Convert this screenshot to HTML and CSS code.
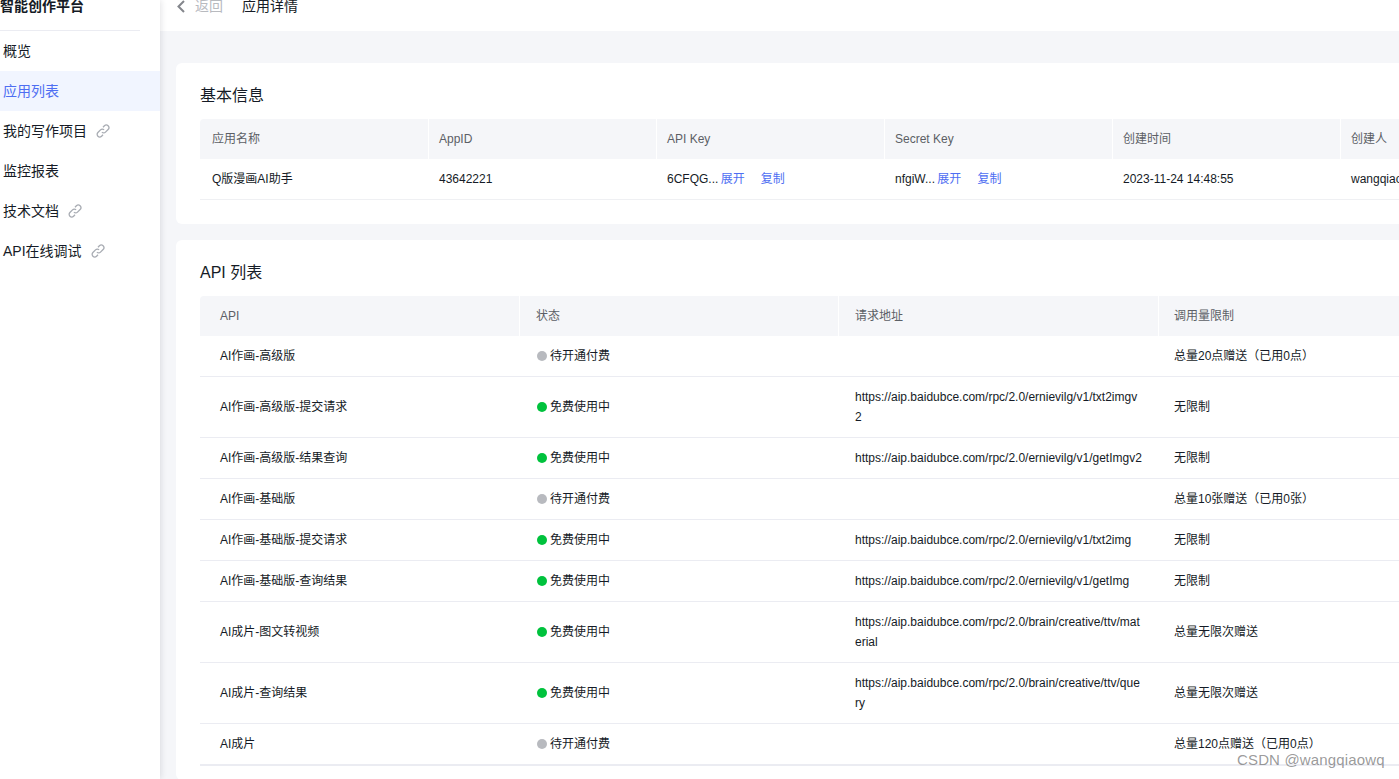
FILE: index.html
```html
<!DOCTYPE html>
<html lang="zh">
<head>
<meta charset="utf-8">
<title>应用详情</title>
<link rel="stylesheet" href="styles.css">
</head>
<body>
<svg class="defs" width="0" height="0"><symbol id="chain" viewBox="0 0 14 14"><path d="M5.9 8.1a2.5 2.5 0 0 0 3.6 0l2.6-2.6a2.6 2.6 0 0 0-3.7-3.7L7 3.2M8.1 5.9a2.5 2.5 0 0 0-3.6 0L1.9 8.5a2.6 2.6 0 0 0 3.7 3.7L7 10.8" fill="none" stroke="currentColor" stroke-width="1.3"/></symbol></svg>
<div class="app">
  <aside class="side">
    <div class="brand">智能创作平台</div>
    <nav class="nav">
      <a class="item">概览</a>
      <a class="item active">应用列表</a>
      <a class="item">我的写作项目<svg class="chain"><use href="#chain"/></svg></a>
      <a class="item">监控报表</a>
      <a class="item">技术文档<svg class="chain"><use href="#chain"/></svg></a>
      <a class="item">API在线调试<svg class="chain"><use href="#chain"/></svg></a>
    </nav>
  </aside>
  <main class="main">
    <header class="top">
      <svg class="back" viewBox="0 0 10 14" width="10" height="14"><path d="M8 1 2.5 6.5 8 12" fill="none" stroke="currentColor" stroke-width="2"/></svg>
      <span class="back-text">返回</span>
      <span class="page-title">应用详情</span>
    </header>
    <div class="content">
      <section class="card info">
        <h2 class="card-title">基本信息</h2>
        <table class="tb tb-info">
          <colgroup><col class="i1"><col class="i1"><col class="i1"><col class="i1"><col class="i1"><col class="i6"></colgroup>
          <thead><tr><th>应用名称</th><th>AppID</th><th>API Key</th><th>Secret Key</th><th>创建时间</th><th>创建人</th></tr></thead>
          <tbody><tr>
            <td>Q版漫画AI助手</td><td>43642221</td>
            <td>6CFQG... <a class="lnk l1">展开</a><a class="lnk">复制</a></td>
            <td>nfgiW... <a class="lnk l1">展开</a><a class="lnk">复制</a></td>
            <td>2023-11-24 14:48:55</td><td>wangqiaowq</td>
          </tr></tbody>
        </table>
      </section>
      <section class="card apis">
        <h2 class="card-title">API 列表</h2>
        <table class="tb tb-api">
          <colgroup><col class="a1"><col class="a2"><col class="a3"><col class="a4"></colgroup>
          <thead><tr><th>API</th><th>状态</th><th>请求地址</th><th>调用量限制</th></tr></thead>
          <tbody>
            <tr><td>AI作画-高级版</td><td><span class="dot off"></span>待开通付费</td><td></td><td>总量20点赠送（已用0点）</td></tr>
            <tr><td>AI作画-高级版-提交请求</td><td><span class="dot on"></span>免费使用中</td><td>https://aip.baidubce.com/rpc/2.0/ernievilg/v1/txt2imgv2</td><td>无限制</td></tr>
            <tr><td>AI作画-高级版-结果查询</td><td><span class="dot on"></span>免费使用中</td><td>https://aip.baidubce.com/rpc/2.0/ernievilg/v1/getImgv2</td><td>无限制</td></tr>
            <tr><td>AI作画-基础版</td><td><span class="dot off"></span>待开通付费</td><td></td><td>总量10张赠送（已用0张）</td></tr>
            <tr><td>AI作画-基础版-提交请求</td><td><span class="dot on"></span>免费使用中</td><td>https://aip.baidubce.com/rpc/2.0/ernievilg/v1/txt2img</td><td>无限制</td></tr>
            <tr><td>AI作画-基础版-查询结果</td><td><span class="dot on"></span>免费使用中</td><td>https://aip.baidubce.com/rpc/2.0/ernievilg/v1/getImg</td><td>无限制</td></tr>
            <tr><td>AI成片-图文转视频</td><td><span class="dot on"></span>免费使用中</td><td>https://aip.baidubce.com/rpc/2.0/brain/creative/ttv/material</td><td>总量无限次赠送</td></tr>
            <tr><td>AI成片-查询结果</td><td><span class="dot on"></span>免费使用中</td><td>https://aip.baidubce.com/rpc/2.0/brain/creative/ttv/query</td><td>总量无限次赠送</td></tr>
            <tr><td>AI成片</td><td><span class="dot off"></span>待开通付费</td><td></td><td>总量120点赠送（已用0点）</td></tr>
          </tbody>
        </table>
      </section>
    </div>
  </main>
</div>
<div class="watermark">CSDN @wangqiaowq</div>
</body>
</html>
```
FILE: styles.css
```css
* { box-sizing: border-box; }
html, body { margin: 0; padding: 0; height: 100%; overflow: hidden; }
body { font-family: "Liberation Sans", "Noto Sans CJK SC", sans-serif; color: #151b26; font-size: 12px; background: #f5f6f9; }
.defs { position: absolute; }
.app { display: flex; height: 779px; width: 1399px; overflow: hidden; }
.side { flex: 0 0 160px; background: #fff; box-shadow: 1px 0 6px rgba(21, 27, 38, .12); position: relative; z-index: 2; }
.brand { height: 31px; width: 140px; font-size: 14px; font-weight: 700; line-height: 12px; border-bottom: 1px solid #ebecf2; white-space: nowrap; }
.nav { display: flex; flex-direction: column; }
.item { display: flex; align-items: center; height: 40px; padding-left: 3px; font-size: 14px; line-height: 20px; color: #151b26; }
.item.active { background: #f1f5ff; color: #4e6ef2; }
.chain { width: 14px; height: 14px; margin-left: 9px; color: #a8acb3; }
.main { flex: 1 1 auto; min-width: 0; overflow: hidden; }
.top { height: 31px; background: #fff; display: flex; align-items: flex-start; padding-left: 16px; }
.back { color: #84868c; }
.back-text { margin-left: 9px; font-size: 14px; line-height: 12px; color: #b8babf; }
.page-title { margin-left: 19px; font-size: 14px; line-height: 12px; color: #151b26; }
.content { padding: 32px 0 0 16px; display: flex; flex-direction: column; gap: 16px; }
.card { width: 1300px; background: #fff; border-radius: 6px 0 0 6px; padding: 24px 24px 0; }
.info { height: 161px; }
.apis { height: 540px; }
.card-title { margin: 0; height: 32px; font-size: 16px; font-weight: 400; line-height: 17px; color: #151b26; }
.tb { border-collapse: separate; border-spacing: 0; table-layout: fixed; width: 1240px; }
.i1 { width: 228px; }
.i6 { width: 100px; }
.tb th { height: 40px; padding: 0 10px; line-height: 20px; background: #f5f6f9; font-weight: 400; text-align: left; color: #5c5f66; border-left: 1px solid #fff; }
.tb th:first-child { border-left: 0; padding-left: 12px; border-radius: 4px 0 0 0; }
.tb td { padding: 10px 10px 10px 11px; line-height: 20px; color: #151b26; border-bottom: 1px solid #eff0f3; white-space: nowrap; }
.tb-info td:first-child { padding-left: 12px; }
.lnk { color: #4e6ef2; }
.l1 { margin: 0 16px 0 -1px; }
.a1 { width: 319px; }
.a2 { width: 319px; }
.a3 { width: 320px; }
.a4 { width: 282px; }
.tb-api th { padding-left: 16px; }
.tb-api th:first-child { padding-left: 20px; }
.tb-api th:last-child { padding-left: 15px; }
.tb-api td { padding: 10px 15px 10px 17px; white-space: normal; word-break: break-all; vertical-align: middle; border-bottom-color: #ebecf2; }
.tb-api td:first-child { padding-left: 20px; }
.tb-api td:nth-child(2) { padding-left: 18px; }
.tb-api td:last-child { padding-left: 16px; }
.tb-api tr:last-child td { border-bottom-width: 2px; }
.dot { display: inline-block; width: 10px; height: 10px; border-radius: 50%; margin-right: 3px; vertical-align: -1px; }
.on { background: #00c23d; }
.off { background: #b8babf; }
.watermark { position: absolute; left: 1237px; top: 751px; font-size: 15px; line-height: 18px; letter-spacing: .15px; color: rgba(90, 90, 90, .62); z-index: 5; white-space: nowrap; }
```
